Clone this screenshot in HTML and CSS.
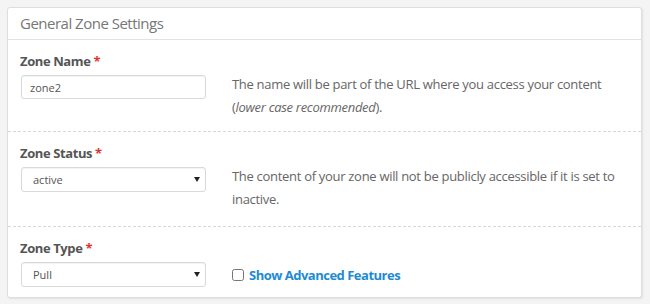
FILE: index.html
```html
<!DOCTYPE html>
<html lang="en">
<head>
    <meta charset="utf-8" />
    <title>General Zone Settings</title>
    <meta name="viewport" content="width=device-width, initial-scale=1" />
<link rel="stylesheet" href="styles.css">
</head>
<body>
<div class="panel">
    <div class="panel-heading">General Zone Settings</div>

    <div class="field">
        <label class="field-label" for="zone-name">Zone Name <span class="required">*</span></label>
        <input class="control" id="zone-name" type="text" value="zone2" />
        <p class="help">The name will be part of the URL where you access your content (<em>lower case recommended</em>).</p>
    </div>

    <div class="field">
        <label class="field-label" for="zone-status">Zone Status <span class="required">*</span></label>
        <div class="select-wrap">
            <select class="control select" id="zone-status">
                <option>active</option>
                <option>inactive</option>
            </select>
        </div>
        <p class="help help-loose">The content of your zone will not be publicly accessible if it is set to inactive.</p>
    </div>

    <div class="field last">
        <label class="field-label" for="zone-type">Zone Type <span class="required">*</span></label>
        <div class="select-wrap">
            <select class="control select" id="zone-type">
                <option>Pull</option>
                <option>Push</option>
            </select>
        </div>
        <label class="advanced"><input type="checkbox" class="check" /> Show Advanced Features</label>
    </div>
</div>
</body>
</html>
```

FILE: styles.css
```css
html, body {
    background-color: #f4f4f4;
}

body {
    margin: 0;
    padding: 7px 8px 7px 7px;
    font-family: 'Open Sans', 'Noto Sans', sans-serif;
    font-size: 13px;
    color: #666;
}

.panel {
    background: #fff;
    border: 1px solid #dedede;
    border-radius: 3px;
    box-shadow: 1px 1px 2px rgba(0, 0, 0, 0.08);
}

.panel-heading {
    height: 31px;
    line-height: 31px;
    padding: 0 12px;
    border-bottom: 1px solid #e2e2e2;
    font-size: 15px;
    letter-spacing: -0.5px;
    color: #777;
}

.field {
    display: grid;
    grid-template-columns: 185px 1fr;
    column-gap: 26px;
    padding: 12px 13px;
    border-bottom: 1px dashed #d8d8d8;
}

.field.last {
    border-bottom: 0;
    padding-bottom: 10px;
}

.field-label {
    grid-column: 1 / 3;
    display: block;
    margin-left: -1px;
    margin-bottom: 5px;
    line-height: 18px;
    font-weight: 700;
    letter-spacing: -0.4px;
    color: #555;
}

.required {
    color: #e0322d;
}

.control {
    box-sizing: border-box;
    width: 185px;
    height: 24px;
    margin: 0;
    padding: 0 8px;
    border: 1px solid #d9d9d9;
    border-radius: 3px;
    box-shadow: inset 0 1px 1px rgba(0, 0, 0, 0.05);
    background: #fff;
    font-family: inherit;
    font-size: 11px;
    color: #555;
    outline: none;
}

.select-wrap {
    position: relative;
    width: 185px;
}

.select {
    height: 25px;
    padding-left: 11px;
    appearance: none;
    -webkit-appearance: none;
}

.select-wrap::after {
    content: "";
    position: absolute;
    right: 6px;
    top: 10px;
    border-left: 3px solid transparent;
    border-right: 3px solid transparent;
    border-top: 5px solid #222;
    pointer-events: none;
}

.help {
    margin: -2px 0 0;
    line-height: 23px;
    letter-spacing: -0.3px;
}

.help-loose {
    margin-bottom: 3px;
}

.help em {
    font-style: italic;
}

.advanced {
    display: flex;
    align-items: center;
    gap: 5px;
    height: 25px;
    font-weight: 700;
    letter-spacing: -0.5px;
    color: #1d8bd1;
}

.check {
    margin: 0;
    width: 12px;
    height: 12px;
}
```
